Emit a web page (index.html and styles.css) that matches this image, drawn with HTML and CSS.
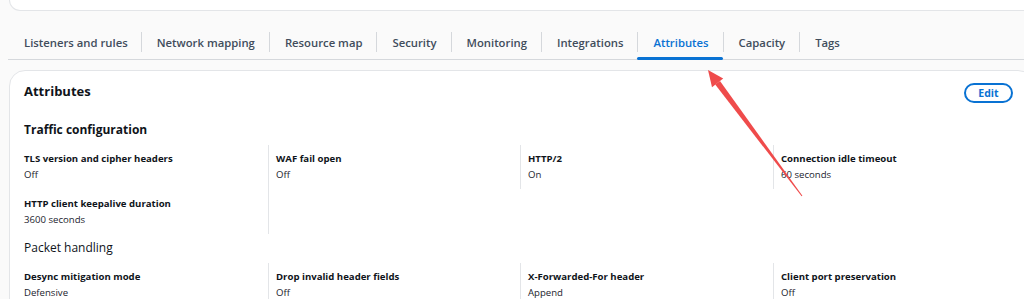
FILE: index.html
```html
<!DOCTYPE html>
<html>
<head>
<meta charset="utf-8">
<link rel="stylesheet" href="styles.css">
</head>
<body>
<div class="page">
  <div class="top-card"></div>
  <nav class="tabs">
    <div class="tab">Listeners and rules</div>
    <div class="tab">Network mapping</div>
    <div class="tab">Resource map</div>
    <div class="tab">Security</div>
    <div class="tab">Monitoring</div>
    <div class="tab">Integrations</div>
    <div class="tab active">Attributes</div>
    <div class="tab">Capacity</div>
    <div class="tab">Tags</div>
  </nav>
  <section class="card">
    <header class="card-head">
      <h2>Attributes</h2>
      <button class="btn">Edit</button>
    </header>
    <h3 class="sec-title">Traffic configuration</h3>
    <div class="grid">
      <div class="col">
        <div class="kv"><div class="k">TLS version and cipher headers</div><div class="v">Off</div></div>
        <div class="kv"><div class="k">HTTP client keepalive duration</div><div class="v">3600 seconds</div></div>
      </div>
      <div class="col div"><div class="kv"><div class="k">WAF fail open</div><div class="v">Off</div></div></div>
      <div class="col div short"><div class="kv"><div class="k">HTTP/2</div><div class="v">On</div></div></div>
      <div class="col div short"><div class="kv"><div class="k">Connection idle timeout</div><div class="v">60 seconds</div></div></div>
    </div>
    <h3 class="sec-title light">Packet handling</h3>
    <div class="grid">
      <div class="col"><div class="kv"><div class="k">Desync mitigation mode</div><div class="v">Defensive</div></div></div>
      <div class="col div"><div class="kv"><div class="k">Drop invalid header fields</div><div class="v">Off</div></div></div>
      <div class="col div"><div class="kv"><div class="k">X-Forwarded-For header</div><div class="v">Append</div></div></div>
      <div class="col div"><div class="kv"><div class="k">Client port preservation</div><div class="v">Off</div></div></div>
    </div>
  </section>
</div>
<svg class="arrow" width="1024" height="299" viewBox="0 0 1024 299">
  <polygon points="720,81 715.2,84.6 801.6,196.3 802.4,195.7" fill="#ef4b4b"/>
  <polygon points="708,70 712,87.2 723.2,78.6" fill="#ef4b4b"/>
</svg>
</body>
</html>
```
FILE: styles.css
```css
html, body { margin: 0; padding: 0; }
body {
  background: #fafafa;
  font-family: "Open Sans", "Liberation Sans", sans-serif;
  color: #0f141a;
  overflow: hidden;
  width: 1024px;
  height: 299px;
  position: relative;
}
.page { padding-left: 9px; width: 1025px; }
.top-card {
  height: 10px;
  background: #fff;
  border: 1px solid #e3e5e8;
  border-top: none;
  border-radius: 0 0 16px 16px;
}
.tabs {
  display: flex;
  align-items: flex-start;
  margin-top: 21px;
  margin-left: -1px;
  border-bottom: 1px solid #d5d8dc;
  height: 27px;
}
.tab {
  position: relative;
  padding: 0 14px 0 15px;
  font-size: 11.3px;
  font-weight: 600;
  color: #414d5c;
  height: 20px;
  line-height: 22px;
  white-space: nowrap;
}
.tab:first-child { padding-left: 16px; padding-right: 13px; }
.tab + .tab { border-left: 1px solid #d5d8dc; }
.tab.active { color: #0972d3; }
.tab.active::after {
  content: "";
  position: absolute;
  left: -1px; right: 0; top: 25px;
  height: 3px;
  border-radius: 2px;
  background: #0972d3;
}
.card {
  margin-top: 10px;
  background: #fff;
  border: 1px solid #e3e5e8;
  border-radius: 16px 16px 0 0;
  padding: 0 20px 0 14px;
  height: 260px;
}
.card-head { display: flex; justify-content: space-between; align-items: flex-start; }
.card-head h2 { margin: 10px 0 0; font-size: 13px; line-height: 20px; font-weight: 700; }
.btn {
  font-family: inherit;
  font-size: 10.5px;
  font-weight: 700;
  color: #0972d3;
  background: #fff;
  border: 2px solid #0972d3;
  border-radius: 12px;
  width: 49px;
  height: 20px;
  padding: 0;
  margin-top: 12px;
  line-height: 16px;
}
.sec-title { margin: 18px 0 6px; font-size: 12px; line-height: 18px; font-weight: 700; }
.sec-title.light { font-weight: 500; margin-top: 5px; }
.grid { display: grid; grid-template-columns: 244px 252px 253px 252px; }
.col { display: flex; flex-direction: column; gap: 7px; padding-bottom: 6px; }
.col.div { border-left: 1px solid #e3e5e8; padding-left: 7px; }
.col.short { align-self: start; }
.kv { padding-top: 6px; }
.k { font-size: 9.6px; font-weight: 700; line-height: 16px; white-space: nowrap; }
.v { font-size: 9.6px; line-height: 16px; color: #1b232d; }
.arrow { position: absolute; left: 0; top: 0; pointer-events: none; }
```
